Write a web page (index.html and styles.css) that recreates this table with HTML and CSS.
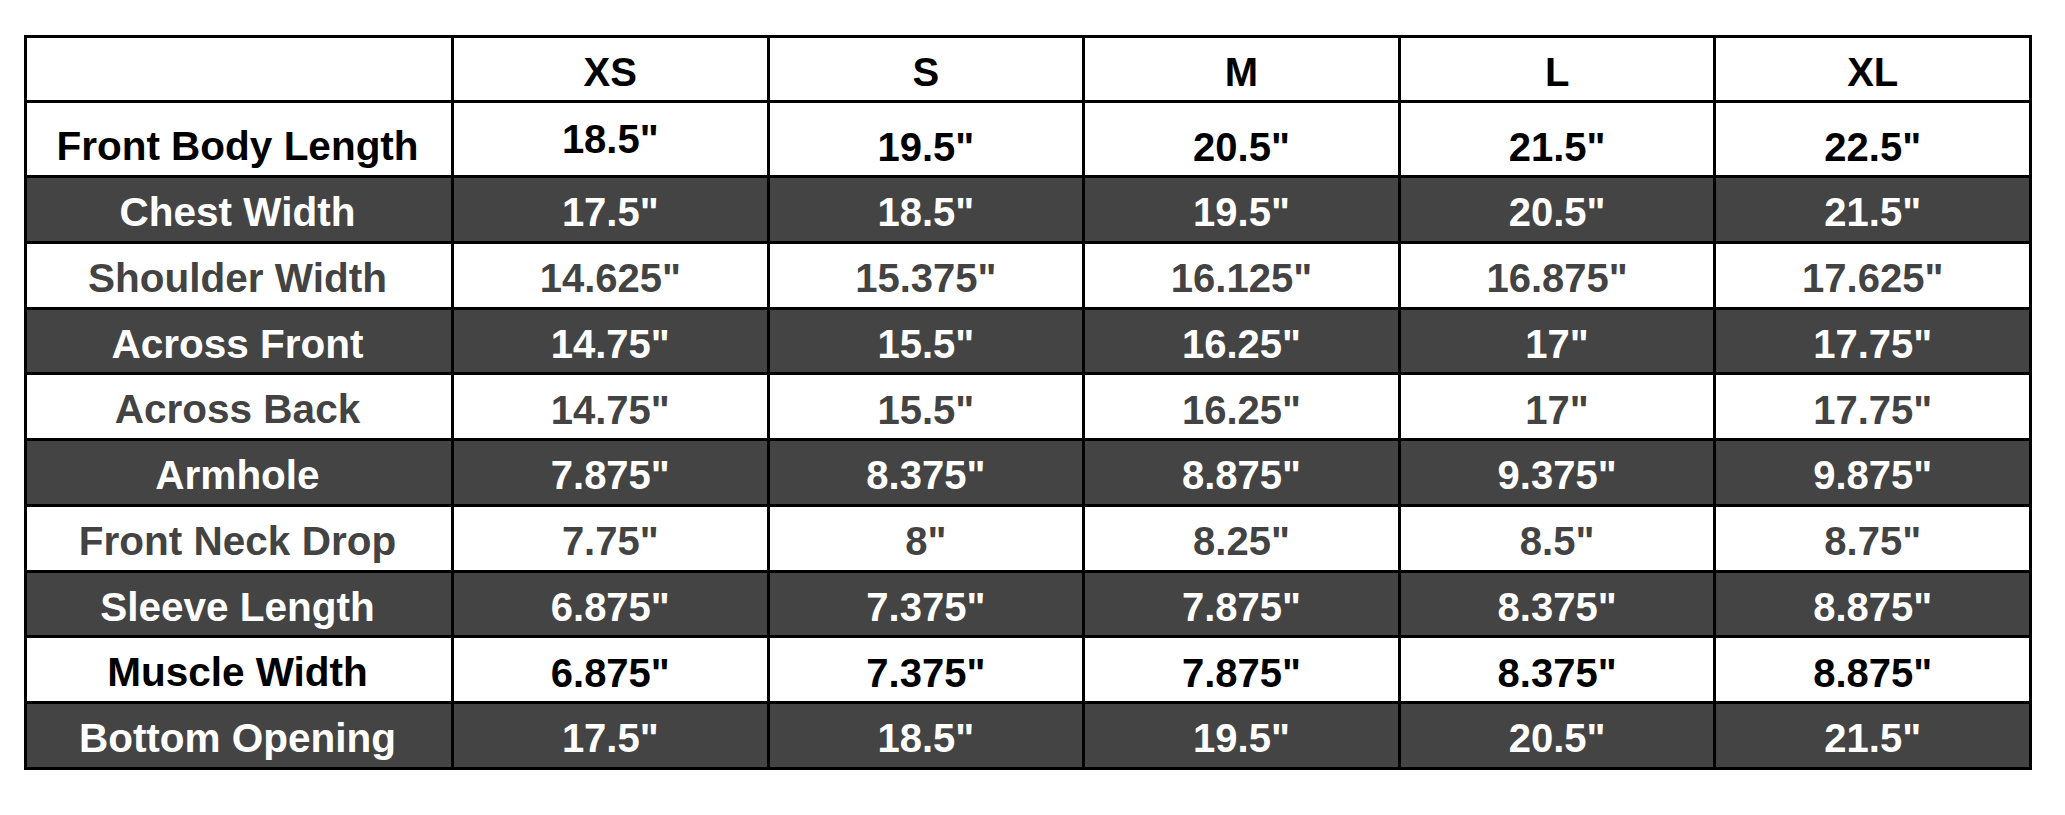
FILE: index.html
```html
<!DOCTYPE html>
<html lang="en">
<head>
<meta charset="utf-8">
<title>Size Chart</title>
<link rel="stylesheet" href="styles.css">
</head>
<body>
<div class="chart">
  <div class="cell head"></div>
  <div class="cell head">XS</div>
  <div class="cell head">S</div>
  <div class="cell head">M</div>
  <div class="cell head">L</div>
  <div class="cell head">XL</div>

  <div class="cell label first black">Front Body Length</div>
  <div class="cell first black up">18.5"</div>
  <div class="cell first black">19.5"</div>
  <div class="cell first black">20.5"</div>
  <div class="cell first black">21.5"</div>
  <div class="cell first black">22.5"</div>

  <div class="cell label dark">Chest Width</div>
  <div class="cell dark">17.5"</div>
  <div class="cell dark">18.5"</div>
  <div class="cell dark">19.5"</div>
  <div class="cell dark">20.5"</div>
  <div class="cell dark">21.5"</div>

  <div class="cell label gray">Shoulder Width</div>
  <div class="cell gray">14.625"</div>
  <div class="cell gray">15.375"</div>
  <div class="cell gray">16.125"</div>
  <div class="cell gray">16.875"</div>
  <div class="cell gray">17.625"</div>

  <div class="cell label dark">Across Front</div>
  <div class="cell dark">14.75"</div>
  <div class="cell dark">15.5"</div>
  <div class="cell dark">16.25"</div>
  <div class="cell dark">17"</div>
  <div class="cell dark">17.75"</div>

  <div class="cell label gray">Across Back</div>
  <div class="cell gray">14.75"</div>
  <div class="cell gray">15.5"</div>
  <div class="cell gray">16.25"</div>
  <div class="cell gray">17"</div>
  <div class="cell gray">17.75"</div>

  <div class="cell label dark">Armhole</div>
  <div class="cell dark">7.875"</div>
  <div class="cell dark">8.375"</div>
  <div class="cell dark">8.875"</div>
  <div class="cell dark">9.375"</div>
  <div class="cell dark">9.875"</div>

  <div class="cell label gray">Front Neck Drop</div>
  <div class="cell gray">7.75"</div>
  <div class="cell gray">8"</div>
  <div class="cell gray">8.25"</div>
  <div class="cell gray">8.5"</div>
  <div class="cell gray">8.75"</div>

  <div class="cell label dark">Sleeve Length</div>
  <div class="cell dark">6.875"</div>
  <div class="cell dark">7.375"</div>
  <div class="cell dark">7.875"</div>
  <div class="cell dark">8.375"</div>
  <div class="cell dark">8.875"</div>

  <div class="cell label black">Muscle Width</div>
  <div class="cell black">6.875"</div>
  <div class="cell black">7.375"</div>
  <div class="cell black">7.875"</div>
  <div class="cell black">8.375"</div>
  <div class="cell black">8.875"</div>

  <div class="cell label dark">Bottom Opening</div>
  <div class="cell dark">17.5"</div>
  <div class="cell dark">18.5"</div>
  <div class="cell dark">19.5"</div>
  <div class="cell dark">20.5"</div>
  <div class="cell dark">21.5"</div>
</div>
</body>
</html>
```
FILE: styles.css
```css
html, body {
  margin: 0;
  padding: 0;
  background: #ffffff;
}

body {
  font-family: "Liberation Sans", Arial, sans-serif;
  font-weight: bold;
}

.chart {
  margin: 35px 0 0 24px;
  width: 2008px;
  box-sizing: border-box;
  display: grid;
  grid-template-columns: 424px repeat(5, 1fr);
  grid-template-rows: 62px 72px repeat(9, 62.75px);
  gap: 3px;
  padding: 3px;
  background: #000000;
}

.cell {
  display: flex;
  align-items: center;
  justify-content: center;
  box-sizing: border-box;
  padding-top: 6px;
  font-size: 40px;
  line-height: 1;
  white-space: nowrap;
  background: #ffffff;
  color: #000000;
}

.label {
  font-size: 40.5px;
  padding-right: 3px;
}

.head {
  padding-top: 5px;
  color: #000000;
}

.first {
  padding-top: 15px;
}

.first.up {
  padding-top: 0;
}

.black {
  color: #000000;
}

.gray {
  color: #434343;
}

.dark {
  background: #444444;
  color: #ffffff;
}
```
